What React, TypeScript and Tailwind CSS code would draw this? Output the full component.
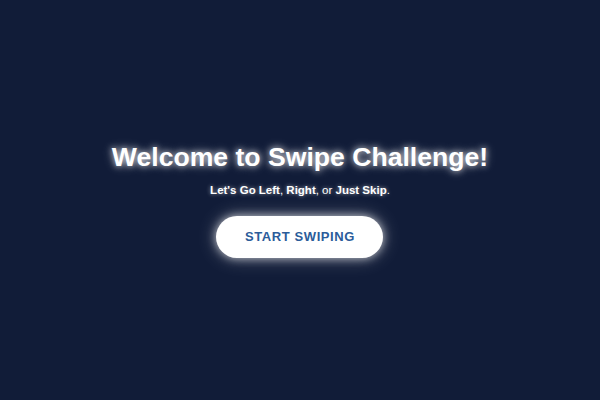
export default function App() {
  return (
    <div className="w-[600px] h-[400px] bg-[#111c38] flex flex-col items-center justify-center font-['Liberation_Sans',Arial,sans-serif]">
      <div className="flex flex-col items-center pt-[2px]">
        <h1 className="text-[26.6px] font-bold text-white leading-none [text-shadow:0_0_6px_rgba(255,255,255,0.8),0_0_12px_rgba(255,255,255,0.4)]">
          Welcome to Swipe Challenge!
        </h1>
        <p className="mt-[14px] text-[11.5px] text-white leading-none [text-shadow:0_0_4px_rgba(255,255,255,0.6)]">
          <b>Let's Go Left</b>, <b>Right</b>, or <b>Just Skip</b>.
        </p>
        <button className="mt-[20px] w-[167px] h-[42px] rounded-full bg-white text-[#2b5c9a] text-[13px] font-bold tracking-[0.6px] shadow-[0_0_10px_rgba(255,255,255,0.7),0_0_20px_rgba(255,255,255,0.3)]">
          START SWIPING
        </button>
      </div>
    </div>
  );
}
